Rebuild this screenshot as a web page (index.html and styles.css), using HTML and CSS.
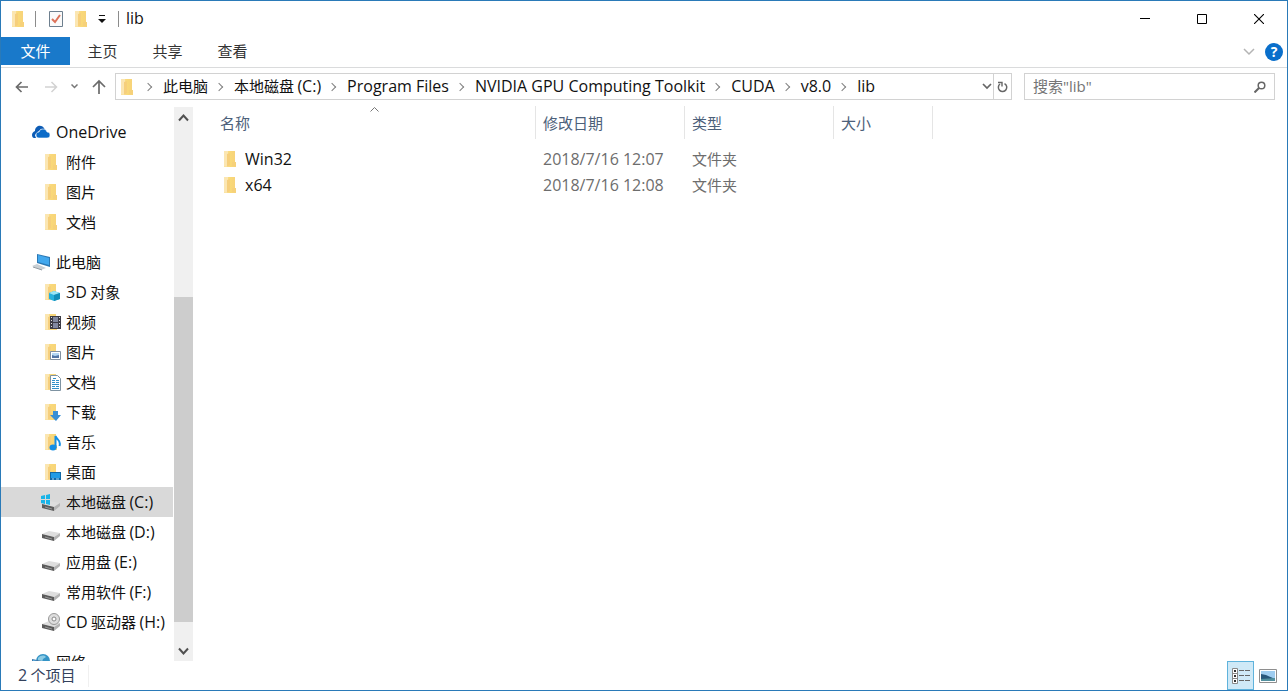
FILE: index.html
```html
<!DOCTYPE html>
<html lang="zh-CN">
<head>
<meta charset="utf-8">
<title>lib</title>
<link rel="stylesheet" href="styles.css">
</head>
<body>
<svg class="defs" aria-hidden="true">
  <linearGradient id="g-folder" x1="0" x2="1" y1="0" y2="0"><stop offset="0" stop-color="#fbe4a4"/><stop offset=".5" stop-color="#f9d978"/><stop offset="1" stop-color="#f7d27a"/></linearGradient>
  <symbol id="folder" viewBox="0 0 20 20">
    <path d="M4 2h11v11h1v5H4z" fill="url(#g-folder)"/>
    <path d="M4 2h4v16l-4-1z" fill="#fbe6b2"/>
    <path d="M7 5l3-1v12l-3 2z" fill="#f6cf7c"/>
    <path d="M12 13h4v4h-4z" fill="#f6d17a"/>
  </symbol>
  <symbol id="drive" viewBox="0 0 20 20">
    <path d="M1 12l7-3 11 2-6 4z" fill="#dedede"/>
    <path d="M1 12l12 3v4L1 16z" fill="#5b5b5b"/>
    <path d="M13 15l6-4v3l-6 5z" fill="#b4b4b4"/>
    <path d="M4 15l7 2" stroke="#999" fill="none"/>
  </symbol>
  <symbol id="onedrive" viewBox="0 0 20 20">
    <path d="M1 13c0-2 1-3 3-4 0-5 6-7 9-3l1 2-4-1-4 4-2 2 1 3H3c-1 0-2-1-2-3z" fill="#0d5cb5"/>
    <path d="M5 13c0-2 1-3 3-3 1-4 7-4 8 0 2 0 3 1 3 3s-1 3-3 3H8c-2 0-3-1-3-3z" fill="#0b6bc8" stroke="#fff" stroke-width=".6"/>
  </symbol>
  <symbol id="pc" viewBox="0 0 20 20">
    <path d="M6 2l13 3v10L6 11z" fill="#2b78b4"/>
    <path d="M7 3l11 3v7L7 10z" fill="#42a8ee"/>
    <path d="M1 14l5-2 9 4-5 2z" fill="#c9cfd4"/>
    <path d="M2 15l9 3" stroke="#929ba2" fill="none"/>
  </symbol>
  <symbol id="net" viewBox="0 0 20 20">
    <circle cx="12" cy="9" r="7" fill="#3494c6"/><path d="M7 6c3-3 6-3 8-1l-3 2-1 3-4-1z" fill="#8ccbe4"/>
    <path d="M1 7l10 2v9L1 15z" fill="#3d77aa"/><path d="M2 8l8 2v6l-8-2z" fill="#5eb4e4"/>
  </symbol>
</svg>

<div class="window">
  <header class="titlebar">
    <svg class="icon"><use href="#folder"/></svg>
    <span class="divider"></span>
    <button class="quick" aria-label="属性"><svg width="16" height="18" viewBox="0 0 16 18"><path d="M1.500 1.500h13v15h-13z" fill="#fafafa" stroke="#6d7f8e"/><path d="M4 9l3 3 5-7" fill="none" stroke="#dc7259" stroke-width="2"/></svg></button>
    <button class="quick" aria-label="新建文件夹"><svg class="icon"><use href="#folder"/></svg></button>
    <button class="quick quick-menu" aria-label="自定义快速访问工具栏"><svg width="8" height="8" viewBox="0 0 8 8"><path d="M1 0h6v1H1zM0 4h8L4 8z" fill="#111"/></svg></button>
    <span class="divider"></span>
    <h1 class="title">lib</h1>
    <div class="controls">
      <button aria-label="最小化"><svg width="10" height="10" viewBox="0 0 10 10"><path d="M0 4.500h10" stroke="#000"/></svg></button>
      <button aria-label="最大化"><svg width="10" height="10" viewBox="0 0 10 10"><path d="M.5.5h9v9h-9z" fill="none" stroke="#000"/></svg></button>
      <button aria-label="关闭"><svg width="10" height="10" viewBox="0 0 10 10"><path d="M0 0l10 10M10 0L0 10" stroke="#000" stroke-width="1.100"/></svg></button>
    </div>
  </header>

  <nav class="tabs">
    <button class="tab tab-file">文件</button>
    <button class="tab">主页</button>
    <button class="tab">共享</button>
    <button class="tab">查看</button>
    <div class="ribbon-tools">
      <button aria-label="展开功能区"><svg width="12" height="8" viewBox="0 0 12 8"><path d="M1 1l5 5 5-5" fill="none" stroke="#b4b4b4" stroke-width="1.500"/></svg></button>
      <button class="help" aria-label="帮助">?</button>
    </div>
  </nav>

  <div class="addressbar">
    <button class="go" aria-label="后退"><svg width="14" height="12" viewBox="0 0 14 12"><path d="M13 6H1.500M6.500 1l-5 5 5 5" fill="none" stroke="#6b6b6b" stroke-width="1.700"/></svg></button>
    <button class="go" aria-label="前进"><svg width="14" height="12" viewBox="0 0 14 12"><path d="M1 6h11.500M7.500 1l5 5-5 5" fill="none" stroke="#d2d2d2" stroke-width="1.500"/></svg></button>
    <button class="go go-small" aria-label="最近位置"><svg width="7" height="5" viewBox="0 0 7 5"><path d="M.5.5l3 3 3-3" fill="none" stroke="#777" stroke-width="1.500"/></svg></button>
    <button class="go" aria-label="向上"><svg width="14" height="15" viewBox="0 0 14 15"><path d="M7 15V2M1 8l6-6 6 6" fill="none" stroke="#6b6b6b" stroke-width="1.700"/></svg></button>
    <div class="path">
      <svg class="icon"><use href="#folder"/></svg>
      <ol class="crumbs">
        <li><a href="#">此电脑</a></li>
        <li><a href="#">本地磁盘 <span class="en">(C:)</span></a></li>
        <li><a class="en" href="#">Program Files</a></li>
        <li><a class="en" href="#">NVIDIA GPU Computing Toolkit</a></li>
        <li><a class="en" href="#">CUDA</a></li>
        <li><a class="en" href="#">v8.0</a></li>
        <li><a class="en" href="#">lib</a></li>
      </ol>
      <button class="path-drop" aria-label="历史记录"><svg width="10" height="7" viewBox="0 0 10 7"><path d="M1 1l4 4 4-4" fill="none" stroke="#666" stroke-width="1.700"/></svg></button>
      <button class="refresh" aria-label="刷新"><svg width="11" height="12" viewBox="0 0 11 12"><path d="M7.500 2.600A4.200 4.200 0 1 1 3 3" fill="none" stroke="#666" stroke-width="1.500"/><path d="M1 1.500h4v4" fill="none" stroke="#666" stroke-width="1.400"/></svg></button>
    </div>
    <div class="search">
      <input type="search" aria-label="搜索" placeholder='搜索"lib"'>
      <button aria-label="开始搜索"><svg width="12" height="12" viewBox="0 0 12 12"><circle cx="7.500" cy="4.500" r="3.300" fill="none" stroke="#666" stroke-width="1.500"/><path d="M5 7l-4.500 4.500" stroke="#666" stroke-width="2"/></svg></button>
    </div>
  </div>

  <div class="body">
    <nav class="tree">
      <a class="root" href="#"><svg class="icon"><use href="#onedrive"/></svg><span class="en">OneDrive</span></a>
      <a href="#"><svg class="icon"><use href="#folder"/></svg>附件</a>
      <a href="#"><svg class="icon"><use href="#folder"/></svg>图片</a>
      <a href="#"><svg class="icon"><use href="#folder"/></svg>文档</a>
      <a class="root" href="#"><svg class="icon"><use href="#pc"/></svg>此电脑</a>
      <a href="#"><svg class="icon" viewBox="0 0 20 20"><use href="#folder"/><path d="M8 11l5-2 6 2v6l-6 2-5-2z" fill="#28b1dc"/><path d="M8 11l5-2 6 2-6 2z" fill="#9be5f5"/><path d="M13 13l6-2v6l-6 2z" fill="#128db8"/></svg><span><span class="en">3D</span> 对象</span></a>
      <a href="#"><svg class="icon" viewBox="0 0 20 20"><use href="#folder"/><path d="M9 4h11v13H9z" fill="#3c3c46"/><path d="M12 5h5v5h-5zM12 11h5v5h-5z" fill="#8188a0"/><path d="M10.500 5v12M18.500 5v12" stroke="#ddd" stroke-dasharray="1 2"/></svg>视频</a>
      <a href="#"><svg class="icon" viewBox="0 0 20 20"><use href="#folder"/><path d="M9.500 9.500h10v8h-10z" fill="#fff" stroke="#8291a0"/><path d="M11 11h7v5h-7z" fill="#b5d8f4"/><path d="M11 13l3 1 4-1v3h-7z" fill="#5376a5"/></svg>图片</a>
      <a href="#"><svg class="icon" viewBox="0 0 20 20"><use href="#folder"/><path d="M9.500 3.500h7l3 3v12h-10z" fill="#fff" stroke="#7e93a2"/><path d="M12 6.500h3M11 8.500h3m1 0h3M11 10.500h3m1 0h3M11 12.500h7M11 14.500h3m1 0h3M11 16.500h7" stroke="#3191c9"/></svg>文档</a>
      <a href="#"><svg class="icon" viewBox="0 0 20 20"><use href="#folder"/><path d="M12 9h5v4h3l-5 6-6-6h3z" fill="#378fd5"/></svg>下载</a>
      <a href="#"><svg class="icon" viewBox="0 0 20 20"><use href="#folder"/><ellipse cx="12" cy="15.500" rx="3.500" ry="3" fill="#138fe6"/><path d="M14.500 16V4c1 4 6 4 4 10" fill="none" stroke="#138fe6" stroke-width="2"/></svg>音乐</a>
      <a href="#"><svg class="icon" viewBox="0 0 20 20"><use href="#folder"/><path d="M9 10h11v8H9z" fill="#1269a6"/><path d="M10 11h9v5h-9z" fill="#219be5"/><path d="M11 17h2m2 0h3" stroke="#a4ddff"/></svg>桌面</a>
      <a class="selected" href="#"><svg class="icon" viewBox="0 0 20 20"><use href="#drive"/><path d="M0 4l4-1v4H0zM5 3l4-1v5H5zM0 8h4v4l-4-1zM5 8h4v5l-4-1z" fill="#18b4e8"/></svg><span>本地磁盘 <span class="en">(C:)</span></span></a>
      <a href="#"><svg class="icon"><use href="#drive"/></svg><span>本地磁盘 <span class="en">(D:)</span></span></a>
      <a href="#"><svg class="icon"><use href="#drive"/></svg><span>应用盘 <span class="en">(E:)</span></span></a>
      <a href="#"><svg class="icon"><use href="#drive"/></svg><span>常用软件 <span class="en">(F:)</span></span></a>
      <a href="#"><svg class="icon" viewBox="0 0 20 20"><use href="#drive"/><circle cx="13" cy="7" r="5.500" fill="#dedede" stroke="#999"/><circle cx="13" cy="7" r="2" fill="#fff" stroke="#888"/></svg><span><span class="en">CD</span> 驱动器 <span class="en">(H:)</span></span></a>
      <a class="root" href="#"><svg class="icon"><use href="#net"/></svg>网络</a>
    </nav>
    <div class="scrollbar">
      <button aria-label="向上滚动"><svg width="11" height="8" viewBox="0 0 11 8"><path d="M1 6.500l4.500-5 4.500 5" fill="none" stroke="#505050" stroke-width="2"/></svg></button>
      <div class="track"><div class="thumb"></div></div>
      <button aria-label="向下滚动"><svg width="11" height="8" viewBox="0 0 11 8"><path d="M1 1.500l4.500 5 4.500-5" fill="none" stroke="#505050" stroke-width="2"/></svg></button>
    </div>
    <main class="files">
      <table>
        <thead>
          <tr><th class="col-name">名称<svg class="sort" width="9" height="5" viewBox="0 0 9 5"><path d="M.5 4.500l4-4 4 4" fill="none" stroke="#777"/></svg></th><th class="col-date">修改日期</th><th class="col-type">类型</th><th class="col-size">大小</th></tr>
        </thead>
        <tbody>
          <tr><td class="name"><a class="en" href="#"><svg class="icon"><use href="#folder"/></svg>Win32</a></td><td class="en">2018/7/16 12:07</td><td>文件夹</td><td></td></tr>
          <tr><td class="name"><a class="en" href="#"><svg class="icon"><use href="#folder"/></svg>x64</a></td><td class="en">2018/7/16 12:08</td><td>文件夹</td><td></td></tr>
        </tbody>
      </table>
    </main>
  </div>

  <footer class="status">
    <span class="count"><span class="en">2</span> 个项目</span>
    <div class="views">
      <button class="view active" aria-label="详细信息"><svg width="18" height="16" viewBox="0 0 18 16"><path d="M.5.5h5v15h-5zM.5 5.500h5M.5 10.500h5" fill="#fff" stroke="#888"/><path d="M2 3h2M2 8h2M2 13h2" stroke="#333" stroke-width="2"/><path d="M7 2.500h5m1 0h5M7 7.500h5m1 0h5M7 12.500h5m1 0h5" stroke="#666"/></svg></button>
      <button class="view" aria-label="大图标"><svg width="18" height="14" viewBox="0 0 18 14"><path d="M.5.5h17v13H.5z" fill="#fff" stroke="#8e8e8e"/><path d="M2 2h14v10H2z" fill="#9fcdf0"/><path d="M2 5l5 1 9 4v2H2z" fill="#28577b"/><path d="M2 10l14-1v3H2z" fill="#52909e"/></svg></button>
    </div>
  </footer>
</div>
</body>
</html>
```
FILE: styles.css
```css
* { box-sizing: border-box; }
body {
  margin: 0;
  font: 15px/20px "Noto Sans CJK SC", sans-serif;
  color: #111;
}
button { padding: 0; border: 0; background: none; font: inherit; color: inherit; display: grid; place-items: center; }
a { color: inherit; text-decoration: none; }
svg { flex: none; }
.defs { position: absolute; width: 0; height: 0; }
.icon { width: 20px; height: 20px; }
.en { font-family: "Open Sans", sans-serif; font-size: 16px; }

.window {
  height: 100vh;
  display: flex;
  flex-direction: column;
  border: 1px solid #2a7ab8;
  background: #fff;
  overflow: hidden;
}

.titlebar { display: flex; align-items: center; height: 36px; padding-left: 7px; }
.divider { width: 1px; height: 16px; margin: 0 7px; background: #8c8c8c; }
.titlebar .quick { width: 25px; height: 24px; }
.titlebar .quick-menu { width: 18px; }
.title { margin: 0; padding-bottom: 2px; font: 16px/20px "Open Sans", sans-serif; }
.controls { display: flex; margin-left: auto; }
.controls button { width: 57px; height: 34px; }

.tabs { display: flex; height: 31px; border-bottom: 1px solid #dadbdc; }
.tab { width: 65px; height: 28px; color: #333; }
.tab-file { width: 69px; background: #1979ca; color: #fff; }
.ribbon-tools { display: flex; align-items: center; gap: 10px; margin-left: auto; padding-right: 4px; }
.help { width: 18px; height: 18px; border-radius: 50%; background: #0a6fcb; color: #fff; font: bold 14px/18px "Open Sans", sans-serif; }

.addressbar { display: flex; align-items: center; height: 37px; padding: 0 12px 0 6px; }
.go { width: 29px; height: 28px; }
.go-small { width: 19px; }
.path { flex: 1; display: flex; align-items: center; height: 27px; margin-left: 2px; padding-left: 1px; border: 1px solid #d2d2d2; }
.crumbs { flex: 1; display: flex; margin: 0; padding: 0 0 2px; list-style: none; white-space: nowrap; }
.crumbs li { display: flex; align-items: center; }
.crumbs li::before {
  content: "";
  width: 5px;
  height: 5px;
  margin: 2px 12px 0 8px;
  border: solid #808080;
  border-width: 1px 1px 0 0;
  rotate: 45deg;
}
.path-drop { width: 12px; height: 25px; }
.refresh { width: 18px; height: 25px; border-left: 1px solid #d2d2d2; }
.search { display: flex; width: 251px; height: 27px; margin-left: 12px; border: 1px solid #d2d2d2; }
.search input { flex: 1; min-width: 0; padding: 0 8px 2px; border: 0; outline: 0; background: none; font: 15px/20px "Open Sans", "Noto Sans CJK SC", sans-serif; }
.search input::placeholder { color: #757575; opacity: 1; }
.search button { width: 28px; }

.body { flex: 1; min-height: 0; display: flex; }
.tree { width: 172px; padding-top: 12px; overflow: hidden; }
.tree a { display: flex; align-items: center; gap: 5px; height: 30px; padding-left: 40px; white-space: nowrap; }
.tree .root { padding-left: 30px; }
.tree a + .root { margin-top: 10px; }
.tree .selected { background: #d9d9d9; }
.scrollbar { width: 19px; margin: 2px 0 0 1px; display: flex; flex-direction: column; background: #f0f0f0; }
.scrollbar button { height: 21px; }
.track { flex: 1; padding: 169px 0 18px; display: flex; }
.thumb { flex: 1; background: #cdcdcd; }

.files { flex: 1; padding: 1px 0 0 1px; }
.files table { border-collapse: separate; border-spacing: 0; table-layout: fixed; width: 739px; }
.files th { position: relative; height: 33px; padding: 0 7px; border-right: 1px solid #e5e5e5; text-align: left; font-weight: 400; color: #4c607a; }
.files tbody::before { content: ""; display: block; height: 7px; }
.files th.col-name { width: 342px; padding-left: 26px; }
.files .col-date, .files .col-type { width: 149px; }
.sort { position: absolute; left: 176px; top: 1px; }
.files td { height: 26px; padding: 0 7px; color: #6d6d6d; }
.files td.name { padding-left: 26px; color: #111; }
.name a { display: flex; align-items: center; gap: 5px; }

.status { display: flex; height: 29px; align-items: center; padding-left: 17px; color: #33415c; }
.count { padding: 0 12px 2px 0; border-right: 1px solid #f0f0f0; }
.views { display: flex; margin-left: auto; padding-right: 6px; }
.view { width: 27px; height: 29px; }
.view.active { border: 1px solid #5fb3dc; background: #cfe9f7; }
```
